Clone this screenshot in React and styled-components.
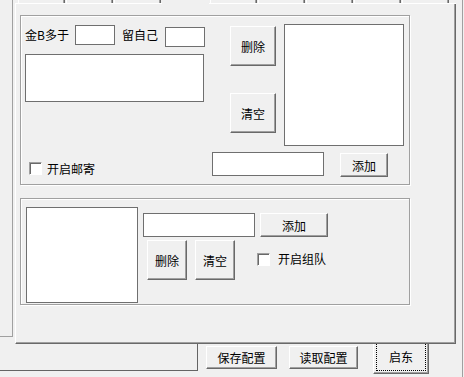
import React from "react";
import styled, { createGlobalStyle } from "styled-components";

const GlobalStyle = createGlobalStyle`
  html, body { margin: 0; padding: 0; background: #f0f0f0; }
  body {
    font-family: "Noto Sans CJK SC", "Noto Sans", sans-serif;
    font-size: 12px;
    color: #000;
  }
  * { box-sizing: border-box; }
`;

const Window = styled.div`
  width: 463px;
  height: 377px;
  border-right: 1px solid #a0a0a0;
  background: #f0f0f0;
  display: flex;
  flex-direction: column;
  overflow: hidden;
`;

const TopArea = styled.div`
  display: flex;
  height: 344px;
`;

const LeftStrip = styled.div`
  width: 13px;
  height: 337px;
  margin-right: 2px;
  border-right: 1px solid #a0a0a0;
  border-bottom: 1px solid #a0a0a0;
`;

const TabControl = styled.div`
  width: 441px;
  display: flex;
  flex-direction: column;
`;

const TabStrip = styled.div`
  display: flex;
  height: 4px;
  padding-left: 3px;
  gap: 1px;
  border-bottom: 1px solid #fff;
`;

const Tab = styled.div`
  width: 47px;
  height: ${(p) => (p.$active ? "4px" : "3px")};
  margin-bottom: ${(p) => (p.$active ? "-1px" : "0")};
  background: #f0f0f0;
  border-left: ${(p) => (p.$active ? "none" : "1px solid #fff")};
  border-right: ${(p) => (p.$active ? "none" : "1px solid #696969")};
  box-shadow: ${(p) => (p.$active ? "none" : "inset -1px 0 0 #a0a0a0")};
`;

const TabPage = styled.div`
  height: 340px;
  border-left: 1px solid #fff;
  border-right: 1px solid #696969;
  border-bottom: 1px solid #696969;
  box-shadow: inset -1px -1px 0 #a0a0a0;
  padding: 11px 0 0 4px;
  display: flex;
  flex-direction: column;
`;

const Group = styled.div`
  width: 390px;
  height: ${(p) => p.$h}px;
  margin-top: ${(p) => p.$mt || 0}px;
  border: 1px solid #a0a0a0;
  box-shadow: 1px 1px 0 #fff, inset 1px 1px 0 #fff;
  display: flex;
  flex-direction: column;
  padding-left: ${(p) => p.$pl}px;
  padding-top: ${(p) => p.$pt || 0}px;
`;

const Row = styled.div`
  display: flex;
  align-items: flex-start;
  margin-top: ${(p) => p.$mt || 0}px;
`;

const Col = styled.div`
  display: flex;
  flex-direction: column;
  width: ${(p) => (p.$w ? `${p.$w}px` : "auto")};
  margin-top: ${(p) => p.$mt || 0}px;
  margin-left: ${(p) => p.$ml || 0}px;
`;

const Label = styled.span`
  display: inline-block;
  width: ${(p) => (p.$w ? `${p.$w}px` : "auto")};
  margin-left: ${(p) => p.$ml || 0}px;
  margin-top: ${(p) => p.$mt || 0}px;
  line-height: ${(p) => p.$lh || 20}px;
  white-space: nowrap;
`;

const Field = styled.div`
  width: ${(p) => p.$w}px;
  height: ${(p) => p.$h}px;
  margin-left: ${(p) => p.$ml || 0}px;
  margin-top: ${(p) => p.$mt || 0}px;
  background: #fff;
  border: 1px solid #6f6f6f;
  flex-shrink: 0;
`;

const Button = styled.button`
  width: ${(p) => p.$w}px;
  height: ${(p) => p.$h}px;
  margin: ${(p) => p.$mt || 0}px 0 0 ${(p) => p.$ml || 0}px;
  padding: 0;
  background: #f0f0f0;
  border: 1px solid;
  border-color: #fff #696969 #696969 #fff;
  box-shadow: inset -1px -1px 0 #a0a0a0;
  font-family: inherit;
  font-size: 12px;
  color: #000;
  display: flex;
  align-items: center;
  justify-content: center;
  flex-shrink: 0;
`;

const Check = styled.span`
  display: inline-block;
  width: 13px;
  height: 13px;
  margin-left: ${(p) => p.$ml || 0}px;
  margin-top: ${(p) => p.$mt || 0}px;
  background: #fff;
  border: 1px solid;
  border-color: #a0a0a0 #fff #fff #a0a0a0;
  box-shadow: inset 1px 1px 0 #696969;
  flex-shrink: 0;
`;

const BottomGrid = styled.div`
  display: grid;
  grid-template-columns: 187px 128px 48px;
  margin-top: 6px;
  align-items: start;
`;

const CheckCell = styled.div`
  display: flex;
  align-items: flex-start;
  padding-left: 4px;
`;

const BottomBar = styled.div`
  display: flex;
  align-items: flex-start;
  height: 33px;
`;

const StatusBox = styled.div`
  width: 198px;
  height: 27px;
  border-right: 1px solid #646464;
  border-bottom: 1px solid #646464;
`;

const StartButton = styled.button`
  width: 56px;
  height: 30px;
  margin-left: 15px;
  padding: 0 2px 2px 2px;
  background: #f0f0f0;
  border: 1px solid;
  border-top: none;
  border-color: #fff #696969 #696969 #fff;
  box-shadow: inset -1px -1px 0 #a0a0a0;
  font-family: inherit;
  font-size: 12px;
  color: #000;
  display: flex;
`;

const FocusRect = styled.span`
  flex: 1;
  border: 1px dotted #000;
  border-top: none;
  display: flex;
  align-items: center;
  justify-content: center;
  padding-bottom: 2px;
`;

export default function App() {
  const tabs = [0, 1, 2, 3, 4, 5, 6, 7, 8];
  return (
    <>
      <GlobalStyle />
      <Window>
        <TopArea>
          <LeftStrip />
          <TabControl>
            <TabStrip>
              {tabs.map((t) => (
                <Tab key={t} $active={t === 3} />
              ))}
            </TabStrip>
            <TabPage>
              <Group $h={170} $pl={4}>
                <Row>
                  <Col $w={180} $mt={9}>
                    <Row>
                      <Label $w={50}>金B多于</Label>
                      <Field $w={40} $h={20} />
                      <Label $w={43} $ml={7}>留自己</Label>
                      <Field $w={40} $h={20} $mt={2} />
                    </Row>
                    <Field $w={179} $h={48} $mt={7} />
                  </Col>
                  <Col $ml={25} $mt={10}>
                    <Button $w={46} $h={40}>删除</Button>
                    <Button $w={46} $h={40} $mt={27}>清空</Button>
                  </Col>
                  <Col $ml={8} $mt={8}>
                    <Field $w={120} $h={122} />
                  </Col>
                </Row>
                <BottomGrid>
                  <CheckCell>
                    <Check $mt={10} />
                    <Label $ml={5} $mt={10} $lh={13}>开启邮寄</Label>
                  </CheckCell>
                  <Field $w={112} $h={24} />
                  <Button $w={48} $h={24} $mt={1}>添加</Button>
                </BottomGrid>
              </Group>
              <Group $h={107} $mt={13} $pl={5} $pt={8}>
                <Row>
                  <Field $w={112} $h={96} />
                  <Col $ml={5} $mt={6}>
                    <Row>
                      <Field $w={112} $h={24} />
                      <Button $w={68} $h={24} $ml={5}>添加</Button>
                    </Row>
                    <Row $mt={3}>
                      <Button $w={40} $h={40} $ml={4}>删除</Button>
                      <Button $w={40} $h={40} $ml={8}>清空</Button>
                      <Check $ml={22} $mt={13} />
                      <Label $ml={8} $mt={12} $lh={14}>开启组队</Label>
                    </Row>
                  </Col>
                </Row>
              </Group>
            </TabPage>
          </TabControl>
        </TopArea>
        <BottomBar>
          <StatusBox />
          <Button $w={71} $h={23} $ml={8} $mt={2}>保存配置</Button>
          <Button $w={69} $h={23} $ml={12} $mt={2}>读取配置</Button>
          <StartButton>
            <FocusRect>启东</FocusRect>
          </StartButton>
        </BottomBar>
      </Window>
    </>
  );
}
